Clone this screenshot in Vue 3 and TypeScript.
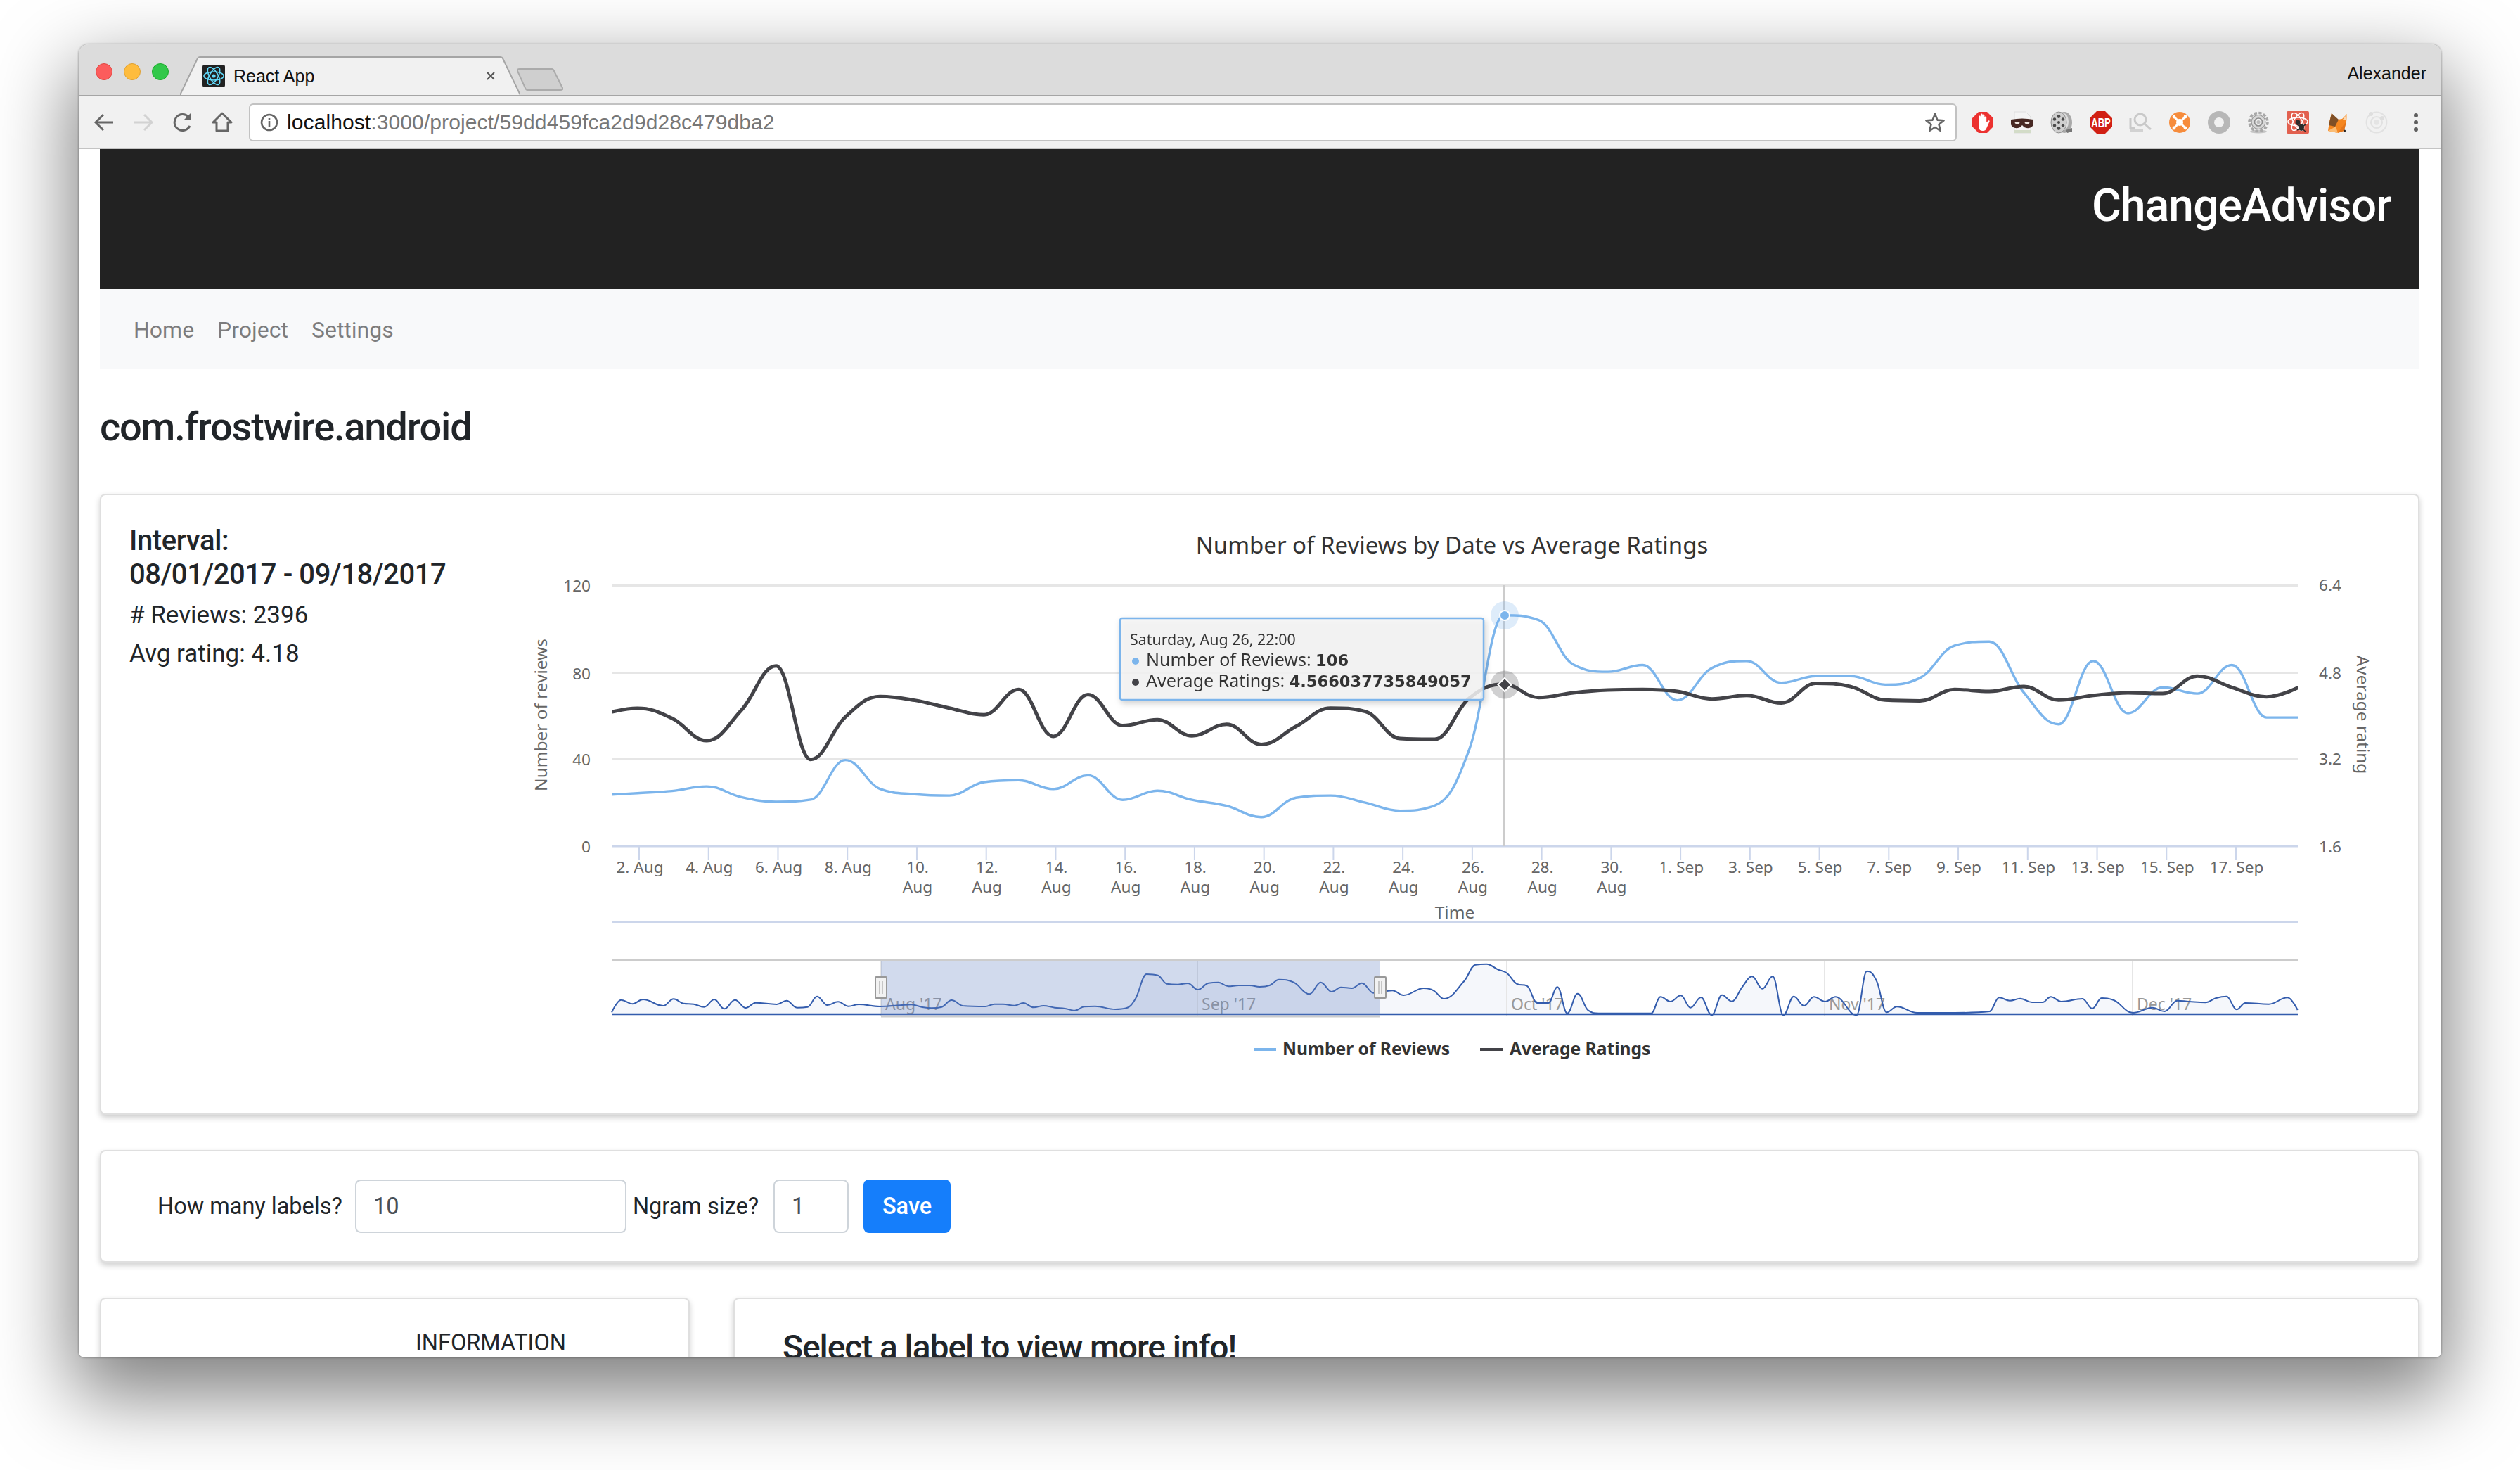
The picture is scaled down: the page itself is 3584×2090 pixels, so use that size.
<script setup lang="ts">
type Point = [number, number]

// daily values read off the chart, spaced 49.3px, anchored on the hovered point
const HOVER_X = 2139
const toY = (v: number) => 740 + v / 2.613

const reviews = [
  1020, 1013, 1005, 988, 1028, 1045, 1037, 890, 997, 1017, 1022, 972, 965, 998,
  947, 1038, 1004, 1038, 1060, 1102, 1030, 1022, 1048, 1078, 1059, 850, 352, 370, 535, 562,
  537, 668, 548, 522, 603, 578, 578, 610, 585, 465, 450, 640, 757, 522, 716, 620, 643, 537, 732, 732
]
const ratings = [
  720, 698, 735, 818, 705, 540, 888, 730, 654, 668, 697, 722, 628, 802,
  647, 762, 740, 800, 757, 832, 765, 697, 710, 810, 813, 660, 608, 658, 640, 630,
  628, 635, 663, 650, 678, 605, 617, 667, 670, 628, 635, 617, 667, 650, 640, 643, 578, 620, 655, 615
]
const daily = (vals: number[]): Point[] => vals.map((v, i) => [HOVER_X + (i - 26) * 49.3, toY(v)])

const navA: Point[] = [
  [47, 298], [68, 245], [93, 262], [117, 243], [162, 270], [185, 241], [207, 260], [230, 263], [253, 275],
  [276, 243], [298, 283], [322, 245], [346, 279], [368, 257], [415, 264], [437, 248], [460, 278], [484, 275],
  [505, 230], [528, 267], [552, 253], [575, 272], [598, 264], [645, 273], [690, 268], [715, 265], [738, 275],
  [760, 280], [783, 275], [805, 246], [830, 270], [880, 273], [900, 263], [920, 263], [945, 269], [965, 258],
  [988, 277], [1010, 270], [1035, 278], [1058, 282], [1080, 290], [1100, 274], [1125, 272], [1170, 285],
  [1195, 280], [1215, 240], [1240, 135], [1265, 140], [1285, 176], [1310, 179], [1332, 174], [1354, 201],
  [1378, 173], [1400, 170], [1422, 187], [1445, 183], [1470, 183], [1492, 189], [1515, 182], [1535, 158]
]
const navB: Point[] = [
  [0, 170], [35, 220], [60, 170], [85, 210], [105, 191], [130, 195], [152, 173], [178, 215], [220, 205], [245, 225],
  [290, 195], [312, 205], [335, 240], [380, 165], [405, 95], [430, 92], [455, 115], [475, 130], [498, 177], [520, 185],
  [543, 258], [568, 258], [588, 190], [610, 302], [633, 218], [657, 290], [680, 302], [797, 302], [818, 232], [840, 252],
  [863, 226], [885, 278], [908, 234], [932, 310], [955, 224], [977, 251], [1000, 190], [1022, 145], [1045, 197], [1068, 145],
  [1092, 310], [1115, 230], [1138, 270], [1160, 232], [1185, 252], [1208, 232], [1255, 310], [1278, 122], [1300, 165],
  [1322, 298], [1345, 274], [1390, 300], [1500, 300]
]
const navC: Point[] = [
  [0, 270], [150, 264], [190, 205], [235, 218], [280, 209], [330, 225], [375, 225], [410, 202], [455, 222], [545, 210],
  [587, 252], [627, 207], [670, 213], [760, 270], [845, 248], [895, 264], [950, 218], [1000, 222], [1070, 226], [1115, 207],
  [1160, 200], [1203, 256], [1240, 228], [1340, 233], [1420, 205], [1463, 258]
]
const navPoints: Point[] = [
  ...navA.map(([x, y]): Point => [840 + x / 1.568, 1340 + y / 3]),
  ...navB.map(([x, y]): Point => [1840 + x / 1.568, 1340 + y / 3]),
  ...navC.map(([x, y]): Point => [2780 + x / 3, 1350 + y / 3])
]

// same smoothing the chart library uses for its spline series
function spline(pts: Point[]): string {
  const smoothing = 1.5
  const denom = smoothing + 1
  let d = `M${pts[0][0].toFixed(1)} ${pts[0][1].toFixed(1)}`
  const right: Point[] = pts.map(p => [p[0], p[1]])
  const left: Point[] = pts.map(p => [p[0], p[1]])
  for (let i = 1; i < pts.length - 1; i++) {
    const [x, y] = pts[i]
    const [px, py] = pts[i - 1]
    const [nx, ny] = pts[i + 1]
    const lx = (smoothing * x + px) / denom
    let ly = (smoothing * y + py) / denom
    const rx = (smoothing * x + nx) / denom
    let ry = (smoothing * y + ny) / denom
    const corr = ((ry - ly) * (rx - x)) / (rx - lx) + y - ry
    ly += corr
    ry += corr
    if (ly > py && ly > y) {
      ly = Math.max(py, y)
      ry = 2 * y - ly
    } else if (ly < py && ly < y) {
      ly = Math.min(py, y)
      ry = 2 * y - ly
    }
    if (ry > ny && ry > y) {
      ry = Math.max(ny, y)
      ly = 2 * y - ry
    } else if (ry < ny && ry < y) {
      ry = Math.min(ny, y)
      ly = 2 * y - ry
    }
    left[i] = [lx, ly]
    right[i] = [rx, ry]
  }
  for (let i = 1; i < pts.length; i++) {
    const a = right[i - 1]
    const b = left[i]
    const p = pts[i]
    d += `C${a[0].toFixed(1)} ${a[1].toFixed(1)} ${b[0].toFixed(1)} ${b[1].toFixed(1)} ${p[0].toFixed(1)} ${p[1].toFixed(1)}`
  }
  return d
}

const reviewsPath = spline(daily(reviews))
const ratingsPath = spline(daily(ratings))
const navLine = spline(navPoints)
const navArea = `${navLine}L3268 1443L870.5 1443Z`

const grid = [
  { y: 832, w: 4, left: '120', right: '6.4' },
  { y: 957, w: 2, left: '80', right: '4.8' },
  { y: 1079, w: 2, left: '40', right: '3.2' }
]

const dayTicks = [
  '2. Aug', '4. Aug', '6. Aug', '8. Aug', '10. Aug', '12. Aug', '14. Aug', '16. Aug', '18. Aug', '20. Aug',
  '22. Aug', '24. Aug', '26. Aug', '28. Aug', '30. Aug', '1. Sep', '3. Sep', '5. Sep', '7. Sep', '9. Sep',
  '11. Sep', '13. Sep', '15. Sep', '17. Sep'
].map((text, i) => {
  const wrap = i >= 4 && i <= 14
  return { x: 910 + i * 98.74, lines: wrap ? text.split(' ') : [text] }
})

const months = [
  { x: 1253, label: "Aug '17" },
  { x: 1703, label: "Sep '17" },
  { x: 2143, label: "Oct '17" },
  { x: 2595, label: "Nov '17" },
  { x: 3033, label: "Dec '17" }
]

const handles = [1253, 1963]
</script>

<template>
  <div class="desk">
    <div class="window">
      <div class="tabstrip">
        <div class="lights">
          <span class="light red"></span>
          <span class="light amber"></span>
          <span class="light green"></span>
        </div>
        <div class="tab">
          <svg class="tab-shape" width="484" height="56" viewBox="0 0 484 56">
            <path d="M0 55 L25 3 Q26 1 28 1 H456 Q458 1 459 3 L484 55" fill="#f1f1f1" stroke="#a5a5a5" stroke-width="2" />
          </svg>
          <svg class="favicon" width="32" height="32" viewBox="0 0 32 32">
            <rect width="32" height="32" rx="3" fill="#222" />
            <g fill="none" stroke="#61dafb" stroke-width="1.6">
              <ellipse cx="16" cy="16" rx="14" ry="6" />
              <ellipse cx="16" cy="16" rx="14" ry="6" transform="rotate(60 16 16)" />
              <ellipse cx="16" cy="16" rx="14" ry="6" transform="rotate(120 16 16)" />
            </g>
            <circle cx="16" cy="16" r="2.6" fill="#61dafb" />
          </svg>
          <span class="tab-title">React App</span>
          <svg class="tab-close" width="14" height="14" viewBox="0 0 14 14">
            <path d="M2 2 L12 12 M12 2 L2 12" stroke="#555" stroke-width="2" />
          </svg>
        </div>
        <svg class="new-tab" width="66" height="32" viewBox="0 0 66 32">
          <path d="M1 4 Q0 1 4 1 H50 Q52 1 53 4 L65 28 Q66 31 62 31 H15 Q13 31 12 28 Z" fill="#cfcfcf" stroke="#ababab" stroke-width="2" />
        </svg>
        <span class="user">Alexander</span>
      </div>

      <div class="toolbar">
        <svg class="tool" width="32" height="32" viewBox="0 0 32 32" fill="none" stroke="#666" stroke-width="3">
          <path d="M29 16 H5 M15 5 L4 16 L15 27" />
        </svg>
        <svg class="tool" width="32" height="32" viewBox="0 0 32 32" fill="none" stroke="#d2d2d2" stroke-width="3">
          <path d="M3 16 H27 M17 5 L28 16 L17 27" />
        </svg>
        <svg class="tool" width="32" height="32" viewBox="0 0 32 32" fill="none" stroke="#666" stroke-width="3">
          <path d="M26 21 A11.5 11.5 0 1 1 24 8" />
          <path d="M27 3 V12 H18 Z" fill="#666" stroke="none" />
        </svg>
        <svg class="tool" width="32" height="32" viewBox="0 0 32 32" fill="none" stroke="#666" stroke-width="3">
          <path d="M16 3 L29 16 H24 V28 H8 V16 H3 Z" stroke-linejoin="round" />
        </svg>
        <div class="omnibox">
          <svg width="26" height="26" viewBox="0 0 26 26" fill="none" stroke="#666">
            <circle cx="13" cy="13" r="11" stroke-width="2.6" />
            <path d="M13 11 V19 M13 7 V9.4" stroke-width="2.6" />
          </svg>
          <span class="url"><b>localhost</b>:3000/project/59dd459fca2d9d28c479dba2</span>
          <svg class="star" width="30" height="30" viewBox="0 0 30 30">
            <path d="M15 3 L18.4 11.6 L27.6 12.2 L20.5 18 L22.8 27 L15 22 L7.2 27 L9.5 18 L2.4 12.2 L11.6 11.6 Z" fill="none" stroke="#666" stroke-width="2.6" stroke-linejoin="round" />
          </svg>
        </div>
        <div class="extensions">
          <!-- adblock -->
          <svg width="32" height="32" viewBox="0 0 32 32">
            <path d="M10 1 H22 L31 10 V22 L22 31 H10 L1 22 V10 Z" fill="#ec3230" />
            <path d="M10 16 V8 a1.4 1.4 0 0 1 2.8 0 V5 a1.4 1.4 0 0 1 2.8 0 V6 a1.4 1.4 0 0 1 2.8 0 V9 a1.4 1.4 0 0 1 2.8 0 V16 L24 13.5 C25.5 13 26 14 25.4 15 L21 25 Q20 28 16 28 Q11 28 10.5 24 Z" fill="#fff" />
          </svg>
          <!-- mask over a page -->
          <svg width="32" height="32" viewBox="0 0 32 32">
            <path d="M5 1 H21 L28 8 V31 H5 Z" fill="#f4f4f4" stroke="#dedede" />
            <rect x="5" y="27" width="23" height="4" fill="#d3dcc8" />
            <path d="M0 12 Q16 9 32 12 V19 Q30 25 22 24 Q18 23 16 20 Q14 23 10 24 Q2 25 0 19 Z" fill="#472823" />
            <ellipse cx="9" cy="16.5" rx="3.4" ry="1.6" fill="#f0e6e0" />
            <ellipse cx="23" cy="16.5" rx="3.4" ry="1.6" fill="#f0e6e0" />
          </svg>
          <!-- film reel -->
          <svg width="32" height="32" viewBox="0 0 32 32">
            <ellipse cx="20" cy="16" rx="11" ry="15" fill="#a9a9a9" />
            <ellipse cx="19" cy="15" rx="7" ry="12" fill="#dcdcdc" />
            <path d="M22 27 L31 24 L31 29 L24 31 Z" fill="#777" />
            <ellipse cx="12" cy="16" rx="11" ry="15" fill="#cfcfcf" stroke="#8d8d8d" />
            <circle cx="12" cy="16" r="2" fill="#444" />
            <g fill="#4a4a4a">
              <circle cx="12" cy="7.5" r="2.4" />
              <circle cx="12" cy="24.5" r="2.4" />
              <circle cx="6" cy="11.5" r="2.2" />
              <circle cx="18" cy="11.5" r="2.2" />
              <circle cx="6" cy="20.5" r="2.2" />
              <circle cx="18" cy="20.5" r="2.2" />
            </g>
          </svg>
          <!-- adblock plus -->
          <svg width="32" height="32" viewBox="0 0 32 32">
            <path d="M10 0 H22 L32 10 V22 L22 32 H10 L0 22 V10 Z" fill="#d12014" />
            <text class="abp" transform="translate(16 22.5) scale(1 1.4)" text-anchor="middle">ABP</text>
          </svg>
          <!-- gray lens -->
          <svg width="32" height="32" viewBox="0 0 32 32" fill="none" stroke="#c9c9c9" stroke-width="3">
            <path d="M2 10 V24 H9" />
            <circle cx="16" cy="12" r="8" />
            <path d="M22 18 L31 26" />
            <path d="M1 25 H20 V29 H1 Z" fill="#d2d2d2" stroke="none" />
          </svg>
          <!-- orange nodes -->
          <svg width="32" height="32" viewBox="0 0 32 32">
            <circle cx="16" cy="16" r="15" fill="#f68c3c" />
            <path d="M8 8 L24 24 M24 8 L8 24" stroke="#fff" stroke-width="3" />
            <circle cx="16" cy="16" r="5" fill="#fff" />
            <g fill="#fff">
              <circle cx="8" cy="8" r="2.4" />
              <circle cx="24" cy="8" r="2.4" />
              <circle cx="8" cy="24" r="2.4" />
              <circle cx="24" cy="24" r="2.4" />
            </g>
          </svg>
          <!-- gray ring -->
          <svg width="32" height="32" viewBox="0 0 32 32">
            <circle cx="16" cy="16" r="11.5" fill="none" stroke="#b7b7b7" stroke-width="9" />
          </svg>
          <!-- gear -->
          <svg width="32" height="32" viewBox="0 0 32 32" fill="none">
            <ellipse cx="16" cy="29" rx="12" ry="2.4" fill="#c4c4c4" />
            <circle cx="16" cy="15.5" r="13" stroke="#a8a8a8" stroke-width="3.6" stroke-dasharray="4.4 2.4" />
            <circle cx="16" cy="15.5" r="10" fill="#d8d8d8" stroke="#999" stroke-width="1.2" />
            <circle cx="16" cy="15.5" r="5.5" fill="#f0f0f0" stroke="#8d8d8d" stroke-width="1.6" />
            <circle cx="16" cy="15.5" r="2.6" fill="#bbb" />
          </svg>
          <!-- atom and bug -->
          <svg width="32" height="32" viewBox="0 0 32 32">
            <rect width="32" height="32" rx="2" fill="#e2604f" />
            <g fill="none" stroke="#fff" stroke-width="1.5">
              <ellipse cx="16" cy="15" rx="14" ry="6" />
              <ellipse cx="16" cy="15" rx="14" ry="6" transform="rotate(60 16 15)" />
              <ellipse cx="16" cy="15" rx="14" ry="6" transform="rotate(120 16 15)" />
            </g>
            <circle cx="16" cy="16" r="3.4" fill="#2c2c2c" />
            <ellipse cx="21" cy="23" rx="4" ry="5" fill="#2c2c2c" />
            <path d="M15 19 L27 29 M15 27 L27 19" stroke="#2c2c2c" stroke-width="1.6" />
          </svg>
          <!-- fox -->
          <svg width="32" height="32" viewBox="0 0 32 32">
            <path d="M3 28 L5 15 L8 3 L17 12 L23 11 L30 4 L29 15 L25 27 L17 31 Z" fill="#f5861f" />
            <path d="M4 20 L8 3 L18 12 L13 22 Z" fill="#7f4f26" />
            <path d="M3 28 L14 22 L17 31 Z" fill="#fbbd76" />
            <path d="M17 31 L24 21 L29 15 L26 28 Z" fill="#e4761b" />
            <path d="M24 12 L30 4 L29 13 Z" fill="#fcd7ae" />
            <circle cx="26.5" cy="28" r="1.6" fill="#222" />
          </svg>
          <!-- faint circles -->
          <svg width="32" height="32" viewBox="0 0 32 32" fill="none" stroke="#e1e1e1">
            <circle cx="16" cy="16" r="14.5" stroke-width="1.8" />
            <circle cx="16" cy="16" r="8" stroke-width="2.2" />
            <circle cx="16" cy="16" r="3.8" fill="#e4e4e4" stroke="none" />
            <circle cx="8" cy="4" r="3" fill="#dedede" stroke="none" />
            <circle cx="24" cy="10" r="3" fill="#dedede" stroke="none" />
          </svg>
          <svg width="32" height="32" viewBox="0 0 32 32" fill="#5f5f5f">
            <circle cx="16" cy="6" r="3" />
            <circle cx="16" cy="16" r="3" />
            <circle cx="16" cy="26" r="3" />
          </svg>
        </div>
      </div>

      <div class="page">
        <header class="banner">ChangeAdvisor</header>
        <nav class="menu">
          <a>Home</a>
          <a>Project</a>
          <a>Settings</a>
        </nav>
        <h3 class="app-name">com.frostwire.android</h3>

        <section class="card chart-card">
          <div class="summary">
            <h5>Interval:<br />08/01/2017 - 09/18/2017</h5>
            <p>
              # Reviews: 2396
            </p>
            <p>
              Avg rating: 4.18
            </p>
          </div>
          <svg class="chart" width="2679" height="799" viewBox="720 744 2679 799">
            <defs>
              <clipPath id="plot"><rect x="870.5" y="820" width="2397.5" height="384" /></clipPath>
            </defs>

            <text class="chart-title" x="2065" y="787" text-anchor="middle">Number of Reviews by Date vs Average Ratings</text>

            <g v-for="g in grid" :key="g.y">
              <line x1="870.5" x2="3268" :y1="g.y" :y2="g.y" stroke="#e6e6e6" :stroke-width="g.w" />
              <text class="tick" x="840" :y="g.y + 9" text-anchor="end">{{ g.left }}</text>
              <text class="tick" x="3298" :y="g.y + 8" >{{ g.right }}</text>
            </g>
            <text class="tick" x="840" y="1212" text-anchor="end">0</text>
            <text class="tick" x="3298" y="1212">1.6</text>

            <text class="axis-title" transform="translate(778 1016.5) rotate(-90)" text-anchor="middle">Number of reviews</text>
            <text class="axis-title" transform="translate(3352 1016) rotate(90)" text-anchor="middle">Average rating</text>
            <text class="axis-title" x="2069" y="1306" text-anchor="middle">Time</text>

            <line x1="870.5" x2="3268" y1="1203" y2="1203" stroke="#ccd6eb" stroke-width="3" />
            <g v-for="t in dayTicks" :key="t.x">
              <line :x1="t.x - 1" :x2="t.x - 1" y1="1203" y2="1223" stroke="#ccd6eb" stroke-width="2" />
              <text class="tick" text-anchor="middle">
                <tspan v-for="(line, i) in t.lines" :key="line" :x="t.x" :y="1241 + i * 28">{{ line }}</tspan>
              </text>
            </g>
            <line x1="870.5" x2="3268" y1="1311" y2="1311" stroke="#ccd6eb" stroke-width="2" />

            <line :x1="2139" :x2="2139" y1="832" y2="1203" stroke="#ccc" stroke-width="2" />

            <g clip-path="url(#plot)" fill="none" stroke-linejoin="round">
              <path :d="reviewsPath" stroke="#7cb5ec" stroke-width="3.4" />
              <path :d="ratingsPath" stroke="#434348" stroke-width="5" />
            </g>

            <circle cx="2140" cy="875" r="20" fill="#7cb5ec" fill-opacity=".25" />
            <circle cx="2140" cy="875" r="7" fill="#7cb5ec" stroke="#fff" stroke-width="2" />
            <circle cx="2140" cy="973.5" r="20" fill="#434348" fill-opacity=".25" />
            <path d="M2140 964 L2149.5 973.5 L2140 983 L2130.5 973.5 Z" fill="#434348" stroke="#fff" stroke-width="2" />

            <g class="tooltip">
              <rect x="1593" y="879" width="517" height="116" rx="3" fill="#f7f7f7" fill-opacity=".85" stroke="#7cb5ec" stroke-width="2.5" />
              <text class="tip-date" x="1607" y="917">Saturday, Aug 26, 22:00</text>
              <circle cx="1615" cy="940" r="5" fill="#7cb5ec" />
              <text class="tip-row" x="1630" y="947">Number of Reviews: <tspan class="tip-value">106</tspan></text>
              <circle cx="1615" cy="970" r="5" fill="#434348" />
              <text class="tip-row" x="1630" y="977">Average Ratings: <tspan class="tip-value">4.566037735849057</tspan></text>
            </g>

            <!-- navigator -->
            <path :d="navArea" fill="#335cad" fill-opacity=".05" />
            <g v-for="m in months" :key="m.label">
              <line :x1="m.x" :x2="m.x" y1="1366" y2="1445" stroke="#e6e6e6" stroke-width="2" />
              <text class="nav-label" :x="m.x + 6" y="1436">{{ m.label }}</text>
            </g>
            <path :d="navLine" fill="none" stroke="#335cad" stroke-width="2" />
            <line x1="870.5" x2="3268" y1="1442" y2="1442" stroke="#335cad" stroke-width="2.4" />
            <rect x="1253" y="1366" width="710" height="79" fill="#6685c2" fill-opacity=".3" />
            <line x1="870.5" x2="3268" y1="1365" y2="1365" stroke="#ccc" stroke-width="2" />
            <line x1="1253" x2="1963" y1="1445" y2="1445" stroke="#ccc" stroke-width="3" />
            <g v-for="h in handles" :key="h">
              <rect :x="h - 8" y="1389" width="16" height="30" rx="1" fill="#f2f2f2" stroke="#999" stroke-width="2" />
              <path :d="`M${h - 2} 1395 V1413 M${h + 2} 1395 V1413`" stroke="#999" />
            </g>

            <line x1="1783" x2="1815" y1="1492" y2="1492" stroke="#7cb5ec" stroke-width="4" />
            <text class="legend" x="1824" y="1500">Number of Reviews</text>
            <line x1="2105" x2="2137" y1="1492" y2="1492" stroke="#434348" stroke-width="4" />
            <text class="legend" x="2147" y="1500">Average Ratings</text>
          </svg>
        </section>

        <section class="card form-card">
          <form class="label-form">
            <label>How many labels?</label>
            <input class="field wide" value="10" />
            <label>Ngram size?</label>
            <input class="field narrow" value="1" />
            <button class="save" type="button">Save</button>
          </form>
        </section>

        <div class="columns">
          <section class="card info-card">INFORMATION</section>
          <section class="card detail-card">
            <h2>Select a label to view more info!</h2>
          </section>
        </div>
      </div>
    </div>
  </div>
</template>

<style>
html, body {
  margin: 0;
  background: #fff;
}
</style>

<style scoped>
.desk {
  width: 3584px;
  height: 2090px;
  padding: 63px 112px 0;
  box-sizing: border-box;
  overflow: hidden;
  background: #fff;
  font-family: Roboto, "Liberation Sans", sans-serif;
  color: #212529;
}

.window {
  width: 3360px;
  height: 1867px;
  border-radius: 14px 14px 8px 8px;
  overflow: hidden;
  background: #fff;
  box-shadow: 0 44px 110px 10px rgba(0, 0, 0, .5), 0 0 3px rgba(0, 0, 0, .45);
}

.tabstrip {
  height: 74px;
  box-sizing: border-box;
  display: flex;
  background: #dcdcdc;
  border-bottom: 2px solid #a5a5a5;
}

.lights {
  display: flex;
  gap: 16px;
  padding: 27px 0 0 24px;
}

.light {
  width: 24px;
  height: 24px;
  box-sizing: border-box;
  border-radius: 50%;
  border: 1px solid;
}

.red { background: #fc5c5c; border-color: #e14842; }
.amber { background: #febc3e; border-color: #dea034; }
.green { background: #32c84a; border-color: #1aab29; }

.tab {
  position: relative;
  width: 484px;
  height: 56px;
  margin: 17px 0 0 16px;
  display: flex;
  align-items: center;
  padding-left: 32px;
  box-sizing: border-box;
  font-size: 25px;
  color: #111;
}

.tab-shape {
  position: absolute;
  left: 0;
  top: 0;
}

.favicon,
.tab-title,
.tab-close {
  position: relative;
}

.tab-title {
  margin: 1px 0 0 12px;
  font-family: "Liberation Sans", sans-serif;
}

.tab-close {
  position: absolute;
  left: 435px;
  top: 21px;
}

.new-tab {
  margin: 34px 0 0 -5px;
}

.user {
  margin: 27px 21px 0 auto;
  line-height: 28px;
  font-size: 25px;
  font-family: "Liberation Sans", sans-serif;
  color: #111;
}

.toolbar {
  height: 75px;
  box-sizing: border-box;
  display: flex;
  align-items: center;
  padding-left: 20px;
  background: #f1f1f1;
  border-bottom: 2px solid #c4c4c4;
}

.tool {
  margin-right: 24px;
}

.omnibox {
  width: 2429px;
  height: 54px;
  box-sizing: border-box;
  margin: 1px 0 0 -2px;
  display: flex;
  align-items: center;
  padding: 0 14px 0 14px;
  background: #fff;
  border: 2px solid #c2c2c2;
  border-radius: 6px;
}

.url {
  margin-left: 12px;
  font-size: 30px;
  letter-spacing: .1px;
  font-family: "Liberation Sans", sans-serif;
  color: #777;
}

.url b {
  font-weight: 400;
  color: #111;
}

.star {
  margin-left: auto;
}

.extensions {
  display: flex;
  gap: 24px;
  margin-left: 21px;
}

.abp {
  font: 700 13px "Liberation Sans", sans-serif;
  fill: #fff;
}

.page {
  padding: 0 31px 0 30px;
}

.banner {
  height: 199px;
  box-sizing: border-box;
  padding: 0 40px 38px;
  display: flex;
  align-items: center;
  justify-content: flex-end;
  background: #222;
  color: #fff;
  font-size: 64px;
  font-weight: 500;
  letter-spacing: -.8px;
}

.menu {
  height: 113px;
  display: flex;
  align-items: center;
  gap: 33px;
  padding: 2px 0 0 48px;
  box-sizing: border-box;
  background: #f8f9fa;
  font-size: 32px;
  color: rgba(0, 0, 0, .5);
}

.app-name {
  margin: 50px 0 61px;
  font-size: 56px;
  line-height: 67px;
  font-weight: 500;
  letter-spacing: -1.2px;
}

.card {
  box-sizing: border-box;
  background: #fff;
  border: 2px solid rgba(0, 0, 0, .125);
  border-radius: 8px;
  box-shadow: 0 4px 8px rgba(0, 0, 0, .2);
}

.chart-card {
  display: flex;
  padding: 40px;
}

.summary {
  width: 536px;
  flex: none;
  padding-top: 1px;
}

.summary h5 {
  margin: 0 0 10px;
  font-size: 40px;
  line-height: 48px;
  font-weight: 500;
  letter-spacing: -.4px;
}

.summary p {
  margin: 0 0 7px;
  font-size: 35px;
  line-height: 48px;
}

.chart {
  flex: none;
  display: block;
  font-family: "Noto Sans", "DejaVu Sans", sans-serif;
}

.chart-title {
  font-size: 33px;
  fill: #333;
}

.tick {
  font-size: 22.6px;
  fill: #666;
}

.axis-title {
  font-size: 24.4px;
  fill: #666;
}

.tooltip {
  filter: drop-shadow(2px 4px 4px rgba(0, 0, 0, .2));
}

.tip-date {
  font-size: 21.4px;
  fill: #333;
}

.tip-row {
  font-size: 25px;
  fill: #333;
}

.tip-value {
  font-family: "DejaVu Sans", sans-serif;
  font-size: 22.5px;
  font-weight: 700;
}

.nav-label {
  font-size: 23px;
  fill: #999;
}

.legend {
  font-size: 24.6px;
  font-weight: 700;
  fill: #333;
}

.form-card {
  height: 160px;
  margin-top: 50px;
  padding: 40px 40px 40px 80px;
}

.label-form {
  display: flex;
  align-items: center;
  font-size: 32.5px;
}

.field {
  height: 76px;
  box-sizing: border-box;
  padding: 0 24px;
  font: inherit;
  color: #495057;
  background: #fff;
  border: 2px solid #ced4da;
  border-radius: 8px;
  outline: none;
}

.wide {
  width: 386px;
  margin: 0 9px 0 18px;
}

.narrow {
  width: 107px;
  margin: 0 21px 0 21px;
}

.save {
  width: 124px;
  height: 76px;
  padding: 0;
  font: inherit;
  font-weight: 500;
  color: #fff;
  background: #157efb;
  border: 0;
  border-radius: 8px;
}

.columns {
  display: flex;
  gap: 62px;
  margin-top: 50px;
}

.info-card {
  width: 839px;
  flex: none;
  height: 300px;
  padding: 42px 0 0 447px;
  font-size: 32.5px;
  line-height: 40px;
}

.detail-card {
  flex: 1;
  height: 300px;
  padding: 40px 68px;
}

.detail-card h2 {
  margin: 0;
  font-size: 48px;
  line-height: 58px;
  font-weight: 500;
  letter-spacing: -1.1px;
}
</style>
